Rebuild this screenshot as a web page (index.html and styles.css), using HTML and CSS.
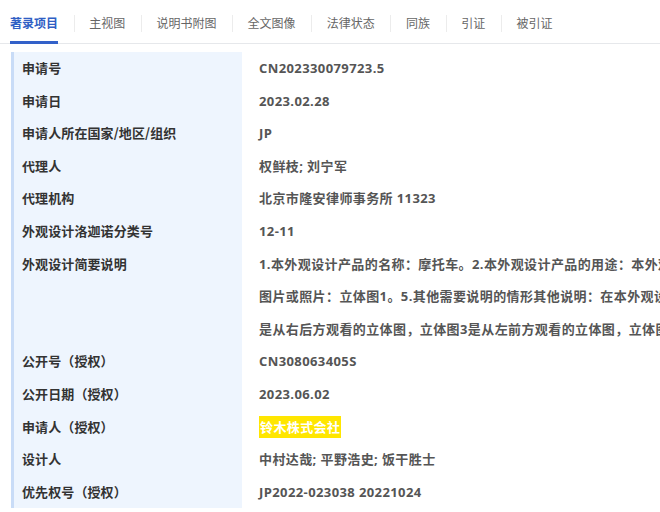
FILE: index.html
```html
<!DOCTYPE html>
<html lang="zh-CN">
<head>
<meta charset="utf-8">
<title>著录项目</title>
<link rel="stylesheet" href="styles.css">
</head>
<body>
<nav class="tabs">
  <span class="tab active"><span class="tab-text">著录项目</span></span>
  <span class="tab"><span class="tab-text">主视图</span></span>
  <span class="tab"><span class="tab-text">说明书附图</span></span>
  <span class="tab"><span class="tab-text">全文图像</span></span>
  <span class="tab"><span class="tab-text">法律状态</span></span>
  <span class="tab"><span class="tab-text">同族</span></span>
  <span class="tab"><span class="tab-text">引证</span></span>
  <span class="tab"><span class="tab-text">被引证</span></span>
</nav>
<div class="biblio">
  <div class="label">申请号</div><div class="value">CN202330079723.5</div>
  <div class="label">申请日</div><div class="value">2023.02.28</div>
  <div class="label">申请人所在国家/地区/组织</div><div class="value">JP</div>
  <div class="label">代理人</div><div class="value">权鲜枝; 刘宁军</div>
  <div class="label">代理机构</div><div class="value">北京市隆安律师事务所 11323</div>
  <div class="label">外观设计洛迦诺分类号</div><div class="value">12-11</div>
  <div class="label">外观设计简要说明</div><div class="value">1.本外观设计产品的名称：摩托车。2.本外观设计产品的用途：本外观设计产品用于驾驶。3.本外观设计产品的设计要点：在于形状。4.最能表明设计要点的<br>图片或照片：立体图1。5.其他需要说明的情形其他说明：在本外观设计中，立体图1是从右前方观看的立体图，立体图2<br>是从右后方观看的立体图，立体图3是从左前方观看的立体图，立体图4是从左后方观看的立体图。</div>
  <div class="label">公开号（授权）</div><div class="value">CN308063405S</div>
  <div class="label">公开日期（授权）</div><div class="value">2023.06.02</div>
  <div class="label">申请人（授权）</div><div class="value"><span class="hl">铃木株式会社</span></div>
  <div class="label">设计人</div><div class="value">中村达哉; 平野浩史; 饭干胜士</div>
  <div class="label">优先权号（授权）</div><div class="value">JP2022-023038 20221024</div>
</div>
</body>
</html>
```
FILE: styles.css
```css
html, body {
  margin: 0;
  padding: 0;
  background: #ffffff;
  overflow: hidden;
}
body {
  font-family: "Open Sans", "Noto Sans CJK SC", sans-serif;
  width: 660px;
  height: 512px;
}
.tabs {
  display: flex;
  align-items: center;
  height: 43px;
  padding-left: 10px;
  border-bottom: 1px solid #e6e8eb;
  box-sizing: content-box;
}
.tab {
  position: relative;
  height: 43px;
  display: flex;
  align-items: center;
  padding: 0 15.6px;
  font-size: 12px;
  color: #666666;
  font-family: "Noto Sans CJK SC", sans-serif;
}
.tab:first-child {
  padding-left: 0;
}
.tab + .tab::before {
  content: "";
  position: absolute;
  left: 0;
  top: 15px;
  height: 17px;
  width: 1px;
  background: #ececec;
}
.tab-text {
  position: relative;
  height: 43px;
  line-height: 46px;
}
.tab.active .tab-text {
  color: #2f5ec4;
  font-weight: 700;
}
.tab.active .tab-text::after {
  content: "";
  position: absolute;
  left: 0;
  right: 0;
  bottom: -1px;
  height: 3px;
  background: #3361c9;
}
.biblio {
  display: grid;
  grid-template-columns: 231px 1fr;
  margin: 8px 0 0 11px;
  font-size: 13px;
  font-weight: 700;
  line-height: 32.6px;
}
.label {
  background: #eef5fe;
  border-left: 3px solid #c9dcf7;
  padding-left: 8px;
  color: #333333;
  font-family: "Noto Sans CJK SC", sans-serif;
  letter-spacing: 0.1px;
}
.value {
  padding-left: 17px;
  color: #555555;
  white-space: nowrap;
  overflow: hidden;
  letter-spacing: 0.4px;
}
.hl {
  background: #ffe600;
  color: #ffffff;
  padding: 2px 1px;
}
```
